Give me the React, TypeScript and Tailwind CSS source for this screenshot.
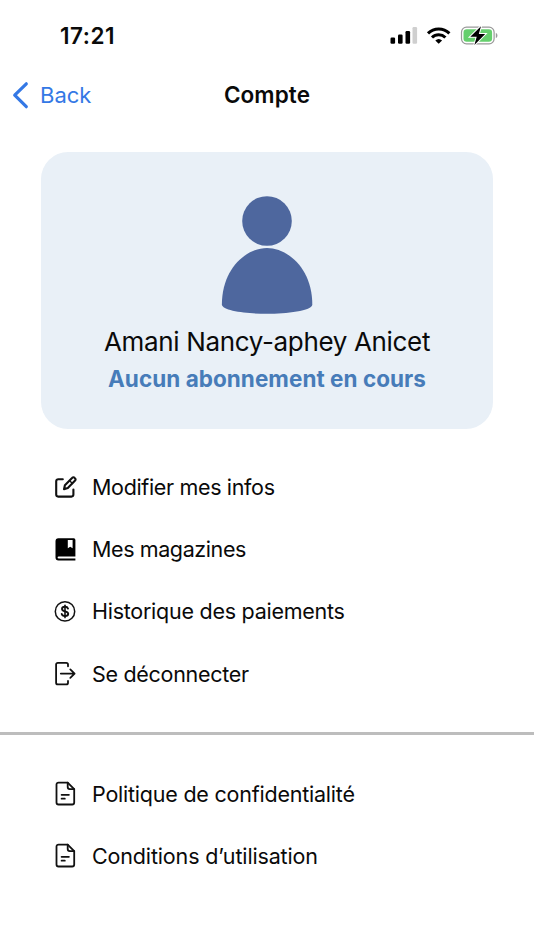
import React from "react";

const EditIcon = () => (
  <svg width="26" height="26" viewBox="0 0 26 26" fill="none" stroke="#111" strokeWidth="2.1" strokeLinecap="round" strokeLinejoin="round">
    <path d="M10.800 4.200H6.200a2 2 0 0 0-2 2v13.400a2 2 0 0 0 2 2h13.200a2 2 0 0 0 2-2v-5" />
    <path d="M12 14.200l.9-4 7.400-7.400a1.500 1.500 0 0 1 2.200 0l.6.6a1.500 1.500 0 0 1 0 2.200L15.800 13z" />
    <path d="M17.500 5.600l2.900 2.900" strokeWidth="1.400" />
  </svg>
);

const BookIcon = () => (
  <svg width="26" height="26" viewBox="0 0 26 26">
    <path
      d="M6.400 1.300h15.400a1.600 1.600 0 0 1 1.600 1.600v16.500H6.700a1.100 1.100 0 0 0 0 2.200h16.700v2H6.500a3 3 0 0 1-3-3V4.300a3 3 0 0 1 2.900-3z"
      fill="#000"
    />
    <path d="M15.800 2.900h4.800v8.300l-2.400-1.500-2.400 1.500z" fill="#fff" />
  </svg>
);

const DollarIcon = () => (
  <svg width="26" height="26" viewBox="0 0 26 26" fill="none" stroke="#111" strokeWidth="1.5" strokeLinecap="round">
    <circle cx="13" cy="12.400" r="9.700" />
    <path d="M16 9.600c-.4-1.200-1.500-1.800-3-1.800-1.700 0-3 .8-3 2.200 0 3.100 6.200 1.500 6.200 4.700 0 1.500-1.400 2.300-3.200 2.300-1.700 0-3-.7-3.300-2.100" strokeWidth="1.900" />
    <path d="M13 6.200v12.400" strokeWidth="1.600" />
  </svg>
);

const LogoutIcon = () => (
  <svg width="26" height="26" viewBox="0 0 26 26" fill="none" stroke="#111" strokeWidth="1.8" strokeLinecap="round" strokeLinejoin="round">
    <path d="M16 5.300V3.500a1.700 1.700 0 0 0-1.700-1.700H5.800a1.700 1.700 0 0 0-1.700 1.700v18.200a1.700 1.700 0 0 0 1.700 1.700h8.500a1.700 1.700 0 0 0 1.700-1.700v-1.800" />
    <path d="M8.800 12.600h13.700M18.300 8.400l4.300 4.200-4.300 4.200" />
  </svg>
);

const FileIcon = () => (
  <svg width="26" height="26" viewBox="0 0 26 26" fill="none" stroke="#111" strokeWidth="1.8" strokeLinecap="round" strokeLinejoin="round">
    <path d="M15.700 1.600H6.500a2 2 0 0 0-2 2v17.900a2 2 0 0 0 2 2h13.700a2 2 0 0 0 2-2V8.100z" />
    <path d="M15.700 1.600v4.500a2 2 0 0 0 2 2h4.500M9.600 13.800h7.300M9.600 17.700h3.200" />
  </svg>
);

const Row = ({ icon, label, className }: { icon: React.ReactNode; label: string; className: string }) => (
  <button className="flex h-[62px] w-full items-center pl-[52px] text-left">
    {icon}
    <span className={`ml-[14px] whitespace-nowrap text-[21.500px] leading-7 ${className}`}>{label}</span>
  </button>
);

export default function App() {
  return (
    <div className="h-[950px] w-[534px] overflow-hidden bg-white font-['Inter',sans-serif] text-[#0a0a0a]">
      <div className="flex h-[71px] items-center justify-between pl-[60px] pr-[36px]">
        <span className="text-[22.5px] font-semibold leading-7 tracking-[0.5px]">17:21</span>
        <svg width="109" height="20" viewBox="0 0 109 20" className="mb-px">
          <rect x="1.500" y="12.500" width="4.600" height="6.200" rx="1.200" />
          <rect x="9" y="9.500" width="4.600" height="9.200" rx="1.200" />
          <rect x="16.500" y="6" width="4.600" height="12.700" rx="1.200" />
          <rect x="23.500" y="2" width="4.600" height="16.700" rx="1.200" fill="#cfcfcf" />
          <g fill="none" stroke="#000" strokeWidth="3.100">
            <path d="M39 8.300a15.600 15.600 0 0 1 21.400 0" />
            <path d="M43 12.500a9.700 9.700 0 0 1 13.400 0" />
          </g>
          <path d="M46.300 15.400a5.100 5.100 0 0 1 6.800 0l-3.400 3.400z" />
          <rect x="72.500" y="2.200" width="32.600" height="16.600" rx="5" fill="#fff" stroke="#999" strokeWidth="1.200" />
          <rect x="74.500" y="4.200" width="28.600" height="12.600" rx="3.200" fill="#65cf6d" />
          <path d="M106.800 7.900c2.200.6 2.200 4.400 0 5z" fill="#999" />
          <path d="M92 1.200L81.300 11.700h6.400L85.400 19.900 96.200 9.100h-6.400z" stroke="#fff" strokeWidth="2" paintOrder="stroke" />
        </svg>
      </div>

      <div className="grid h-[48px] grid-cols-3 items-center">
        <button className="flex items-center pl-[12px] text-[22px] leading-7 text-[#3478e5]">
          <svg width="17" height="28" viewBox="0 0 17 28" fill="none" stroke="currentColor" strokeWidth="3.200" strokeLinecap="round" strokeLinejoin="round" className="mb-px">
            <path d="M14.300 2.800L2.700 14.200l11.600 11.500" />
          </svg>
          <span className="mb-px ml-[11px]">Back</span>
        </button>
        <h1 className="text-center text-[22.5px] font-semibold leading-7 tracking-[0.1px]">Compte</h1>
      </div>

      <div className="mx-[41px] mt-[33px] flex h-[277px] flex-col items-center rounded-[27px] bg-[#e9f0f7] pt-[43px]">
        <svg width="92" height="120" viewBox="0 0 92 120" fill="#4e679e">
          <circle cx="46" cy="26" r="24.800" />
          <path d="M46 53C67 53 91.300 74 91.300 109.500 91.300 116 65 118.800 46 118.800S.9 116 .9 109.500C.9 74 25 53 46 53z" />
        </svg>
        <p className="mt-[10px] whitespace-nowrap text-[26px] leading-[34px] tracking-[-0.34px]">Amani Nancy-aphey Anicet</p>
        <p className="mt-[6px] whitespace-nowrap text-[22.5px] font-bold leading-[28px] tracking-[0.04px] text-[#477cb9]">Aucun abonnement en cours</p>
      </div>

      <div className="mt-[28px]">
        <Row icon={<EditIcon />} label="Modifier mes infos" className="mb-[2px] tracking-[-0.34px]" />
        <Row icon={<BookIcon />} label="Mes magazines" className="mb-[2px] tracking-[-0.4px]" />
        <Row icon={<DollarIcon />} label="Historique des paiements" className="mb-[2px] tracking-[-0.26px]" />
        <Row icon={<LogoutIcon />} label="Se déconnecter" className="mb-px tracking-[-0.3px]" />
      </div>

      <div className="mt-[27px] h-[3px] bg-[#bdbdbd]" />

      <div className="mt-[28px]">
        <Row icon={<FileIcon />} label="Politique de confidentialité" className="mb-px tracking-[-0.22px]" />
        <Row icon={<FileIcon />} label="Conditions d’utilisation" className="tracking-[-0.15px]" />
      </div>
    </div>
  );
}
